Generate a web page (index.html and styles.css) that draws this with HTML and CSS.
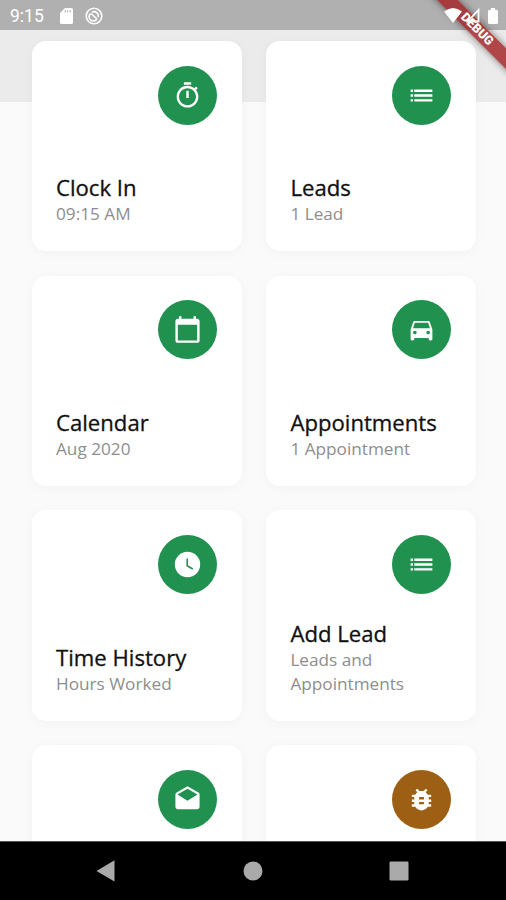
FILE: index.html
```
<!DOCTYPE html>
<html lang="en">
<head>
    <meta charset="UTF-8">
    <meta name="viewport" content="width=device-width, initial-scale=1.0">
    <title>Dashboard</title>
    <link rel="stylesheet" href="styles.css">
</head>
<body>
    <div class="phone">
        <main class="screen">
            <div class="grid">
                <div class="card">
                    <div class="icon">
                        <svg viewBox="0 0 24 24"><path d="M15 1H9v2h6V1zm-4 13h2V8h-2v6zm8.030-6.610l1.420-1.420c-.43-.51-.9-.99-1.410-1.410l-1.420 1.420C16.070 4.740 14.120 4 12 4c-4.970 0-9 4.030-9 9s4.020 9 9 9 9-4.030 9-9c0-2.120-.74-4.070-1.970-5.610zM12 20c-3.870 0-7-3.130-7-7s3.130-7 7-7 7 3.130 7 7-3.130 7-7 7z"/></svg>
                    </div>
                    <div class="label">
                        <h2>Clock In</h2>
                        <p>09:15 AM</p>
                    </div>
                </div>
                <div class="card">
                    <div class="icon">
                        <svg viewBox="0 0 24 24"><path d="M3 13h2v-2H3v2zm0 4h2v-2H3v2zm0-8h2V7H3v2zm3 4h15v-2H6v2zm0 4h15v-2H6v2zM6 7v2h15V7H6z"/></svg>
                    </div>
                    <div class="label">
                        <h2>Leads</h2>
                        <p>1 Lead</p>
                    </div>
                </div>
                <div class="card">
                    <div class="icon">
                        <svg viewBox="0 0 24 24"><path d="M20 3h-1V1h-2v2H7V1H5v2H4c-1.100 0-2 .9-2 2v16c0 1.100.9 2 2 2h16c1.100 0 2-.9 2-2V5c0-1.100-.9-2-2-2zm0 18H4V8h16v13z"/></svg>
                    </div>
                    <div class="label">
                        <h2>Calendar</h2>
                        <p>Aug 2020</p>
                    </div>
                </div>
                <div class="card">
                    <div class="icon">
                        <svg viewBox="0 0 24 24"><path d="M18.920 6.010C18.720 5.420 18.160 5 17.500 5h-11c-.66 0-1.210.42-1.420 1.010L3 12v8c0 .55.45 1 1 1h1c.55 0 1-.45 1-1v-1h12v1c0 .55.45 1 1 1h1c.55 0 1-.45 1-1v-8l-2.080-5.990zM6.500 16c-.83 0-1.500-.67-1.500-1.500S5.670 13 6.500 13s1.500.67 1.500 1.500S7.330 16 6.500 16zm11 0c-.83 0-1.500-.67-1.500-1.500s.67-1.500 1.500-1.500 1.500.67 1.500 1.500-.67 1.500-1.500 1.500zM5 11l1.500-4.500h11L19 11H5z"/></svg>
                    </div>
                    <div class="label">
                        <h2>Appointments</h2>
                        <p>1 Appointment</p>
                    </div>
                </div>
                <div class="card">
                    <div class="icon">
                        <svg viewBox="0 0 24 24"><circle cx="12" cy="12" r="10.500"/><path class="hands" d="M11.750 7v6l4.600 2.700"/></svg>
                    </div>
                    <div class="label">
                        <h2>Time History</h2>
                        <p>Hours Worked</p>
                    </div>
                </div>
                <div class="card">
                    <div class="icon">
                        <svg viewBox="0 0 24 24"><path d="M3 13h2v-2H3v2zm0 4h2v-2H3v2zm0-8h2V7H3v2zm3 4h15v-2H6v2zm0 4h15v-2H6v2zM6 7v2h15V7H6z"/></svg>
                    </div>
                    <div class="label">
                        <h2>Add Lead</h2>
                        <p>Leads and Appointments</p>
                    </div>
                </div>
                <div class="card">
                    <div class="icon">
                        <svg viewBox="0 0 24 24"><path d="M21.990 8c0-.72-.37-1.350-.94-1.700L12 1 2.950 6.300C2.380 6.650 2 7.280 2 8v10c0 1.100.9 2 2 2h16c1.100 0 2-.9 2-2l-.01-10zM12 13L3.740 7.840 12 3l8.260 4.840L12 13z"/></svg>
                    </div>
                </div>
                <div class="card">
                    <div class="icon icon-bug">
                        <svg viewBox="0 0 24 24"><path d="M20 8h-2.810c-.45-.78-1.070-1.450-1.820-1.960L17 4.410 15.590 3l-2.170 2.170C12.960 5.060 12.490 5 12 5s-.96.06-1.410.17L8.410 3 7 4.410l1.620 1.630C7.880 6.550 7.260 7.220 6.810 8H4v2h2.090c-.05.33-.09.66-.09 1v1H4v2h2v1c0 .34.04.67.09 1H4v2h2.810c1.040 1.790 2.970 3 5.190 3s4.150-1.210 5.190-3H20v-2h-2.090c.05-.33.09-.66.09-1v-1h2v-2h-2v-1c0-.34-.04-.67-.09-1H20V8zm-6 8h-4v-2h4v2zm0-4h-4v-2h4v2z"/></svg>
                    </div>
                </div>
            </div>
        </main>

        <div class="debug">DEBUG</div>

        <header class="status">
            <span class="time">9:15</span>
            <svg class="sd" viewBox="0 0 13 16"><path d="M5 0h6.500Q13 0 13 1.500v13q0 1.500-1.500 1.500h-10Q0 16 0 14.500V5z"/><path class="slots" d="M5.200 2v2.500M7.700 2v2.500M10.200 2v2.500"/></svg>
            <svg class="sync" viewBox="0 0 18 18"><circle cx="9" cy="9" r="7.800"/><path d="M5.500 6.500A4.300 4.300 0 1 0 12 12M7 5.200A4.300 4.300 0 0 1 13.200 10M6 6.500l6 5.500"/></svg>
            <span class="space"></span>
            <svg class="wifi" viewBox="0 0 18 15"><path d="M0 3.500Q9-3.500 18 3.500L9 15z"/></svg>
            <svg class="signal" viewBox="0 0 14 15"><path d="M12.500 2v11.500H1.800z"/></svg>
            <svg class="battery" viewBox="0 0 10 16"><path d="M3 0h4v1.800h1.500Q10 1.800 10 3.300v11.200Q10 16 8.500 16h-7Q0 16 0 14.500V3.300Q0 1.800 1.500 1.800H3z"/></svg>
        </header>

        <nav class="navbar">
            <svg viewBox="0 0 24 24"><path d="M20.500 1.300v21.200L2.500 11.900z"/></svg>
            <svg viewBox="0 0 24 24"><circle cx="12" cy="12" r="9.500"/></svg>
            <svg viewBox="0 0 24 24"><rect x="2.500" y="2.500" width="19" height="19" rx="1.300"/></svg>
        </nav>
    </div>
</body>
</html>
```
FILE: styles.css
```
* {
    box-sizing: border-box;
}
body {
    margin: 0;
    font-family: 'Open Sans', 'Noto Sans', sans-serif;
}
.phone {
    position: relative;
    display: flex;
    flex-direction: column;
    width: 506px;
    height: 900px;
    overflow: hidden;
}
.screen {
    flex: 1;
    min-height: 0;
    overflow: hidden;
    padding: 41px 30px 0 31.500px;
    background: linear-gradient(#b0b0b0 30px, #ebebeb 30px, #ebebeb 102px, #fafafa 102px);
}
.grid {
    display: grid;
    grid-template-columns: 1fr 1fr;
    grid-auto-rows: 210.400px;
    gap: 24.300px;
}
.card {
    display: flex;
    flex-direction: column;
    justify-content: space-between;
    padding: 24.800px 25px 25.500px 24.500px;
    background: #fff;
    border-radius: 14px;
    box-shadow: 0 2px 12px rgba(0, 0, 0, 0.035);
}
.icon {
    display: flex;
    align-items: center;
    justify-content: center;
    align-self: flex-end;
    width: 59px;
    height: 59px;
    border-radius: 50%;
    background: #219150;
}
.icon-bug {
    background: #9c5f14;
}
.icon svg {
    width: 29px;
    height: 29px;
    fill: #fff;
}
.icon .hands {
    fill: none;
    stroke: #219150;
    stroke-width: 1.300;
}
.label h2 {
    margin: 0;
    font-size: 22.150px;
    font-weight: 400;
    line-height: 30px;
    color: #111;
    -webkit-text-stroke: 0.300px #111;
}
.label p {
    margin: 0;
    font-size: 17.200px;
    line-height: 23.500px;
    color: #8e8e8e;
}

/* system bars */
.status {
    position: absolute;
    top: 0;
    left: 0;
    display: flex;
    align-items: center;
    width: 100%;
    height: 30px;
    padding: 1px 8.500px 0 10px;
    color: #fff;
}
.status svg {
    fill: #fff;
}
.time {
    width: 50px;
    font-family: Roboto, sans-serif;
    font-size: 17.500px;
}
.sd {
    width: 13px;
    height: 16px;
}
.sd .slots {
    stroke: #b0b0b0;
}
.status .sync {
    width: 18px;
    height: 18px;
    margin-left: 12px;
    fill: none;
    stroke: #fff;
    stroke-width: 1.600;
}
.space {
    flex: 1;
}
.wifi {
    width: 18px;
    height: 15px;
}
.status .signal {
    width: 14px;
    height: 15px;
    margin: 0 8px 0 4px;
    fill: none;
    stroke: #fff;
    stroke-width: 1.800;
}
.battery {
    width: 10px;
    height: 16px;
}
.debug {
    position: absolute;
    top: 22.200px;
    right: -69.500px;
    width: 198px;
    height: 14.800px;
    transform: rotate(45deg);
    background: rgba(163, 38, 40, 0.84);
    box-shadow: 0 0 7px rgba(0, 0, 0, 0.5);
    color: #fff;
    font: 900 12.500px/14.800px Roboto, sans-serif;
    text-align: center;
}
.navbar {
    display: flex;
    align-items: center;
    justify-content: space-between;
    height: 59px;
    padding: 0 95px 0 94px;
    border-top: 1px solid #555;
    background: #000;
}
.navbar svg {
    width: 24px;
    height: 24px;
    fill: #aaa;
}
```
